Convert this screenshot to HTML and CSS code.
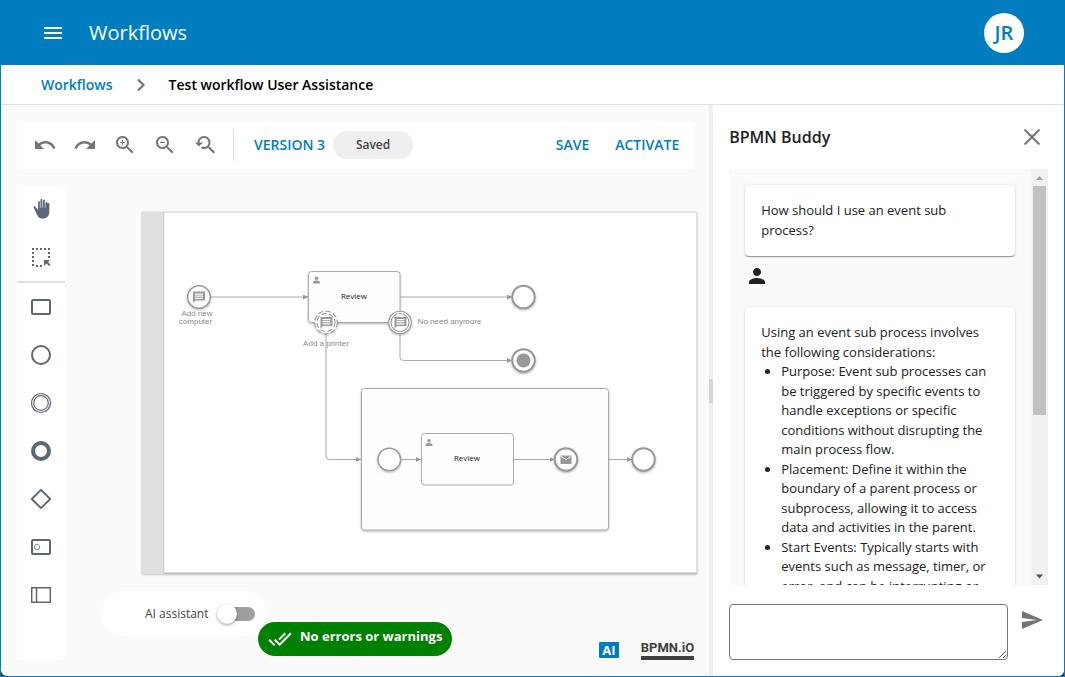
FILE: index.html
```html
<!DOCTYPE html>
<html lang="en">
<head>
<meta charset="utf-8">
<title>Workflows</title>
<link rel="stylesheet" href="styles.css">
</head>
<body>
<div class="app">
  <header class="topbar">
    <button class="icon-btn menu" type="button" aria-label="Menu"><svg width="24" height="24" viewBox="0 0 24 24"><path fill="currentColor" d="M3 18h18v-2H3v2zm0-5h18v-2H3v2zm0-7v2h18V6H3z"/></svg></button>
    <h1 class="title">Workflows</h1>
    <button class="avatar" type="button">JR</button>
  </header>
  <nav class="crumbs" aria-label="Breadcrumb">
    <a href="#">Workflows</a>
    <svg width="24" height="24" viewBox="0 0 24 24"><path d="M9 6.500L14.500 12 9 17.500" fill="none" stroke="#757575" stroke-width="2.200"/></svg>
    <span>Test workflow User Assistance</span>
  </nav>
  <main class="main">
    <section class="editor">
      <div class="toolbar">
        <button class="tool" type="button" aria-label="Undo"><svg width="24" height="24" viewBox="0 0 24 24"><path fill="currentColor" d="M12.500 8c-2.650 0-5.050.99-6.900 2.600L2 7v9h9l-3.620-3.620c1.390-1.160 3.160-1.880 5.120-1.880 3.540 0 6.550 2.310 7.600 5.500l2.370-.78C21.080 11.030 17.150 8 12.500 8z"/></svg></button>
        <button class="tool" type="button" aria-label="Redo"><svg width="24" height="24" viewBox="0 0 24 24"><path fill="currentColor" d="M18.400 10.600C16.550 8.990 14.150 8 11.500 8c-4.650 0-8.580 3.030-9.960 7.220L3.900 16c1.050-3.190 4.050-5.500 7.600-5.500 1.950 0 3.730.72 5.120 1.880L13 16h9V7l-3.600 3.600z"/></svg></button>
        <button class="tool" type="button" aria-label="Zoom in"><svg width="24" height="24" viewBox="0 0 24 24"><path fill="currentColor" d="M15.500 14h-.79l-.28-.27C15.410 12.590 16 11.110 16 9.500 16 5.910 13.090 3 9.500 3S3 5.910 3 9.500 5.910 16 9.500 16c1.610 0 3.090-.59 4.230-1.570l.27.28v.79l5 4.990L20.490 19l-4.990-5zm-6 0C7.010 14 5 11.990 5 9.500S7.010 5 9.500 5 14 7.010 14 9.500 11.990 14 9.500 14zm2.500-4h-2v2H9v-2H7V9h2V7h1v2h2v1z"/></svg></button>
        <button class="tool" type="button" aria-label="Zoom out"><svg width="24" height="24" viewBox="0 0 24 24"><path fill="currentColor" d="M15.500 14h-.79l-.28-.27C15.410 12.590 16 11.110 16 9.500 16 5.910 13.090 3 9.500 3S3 5.910 3 9.500 5.910 16 9.500 16c1.610 0 3.090-.59 4.230-1.570l.27.28v.79l5 4.990L20.490 19l-4.990-5zm-6 0C7.010 14 5 11.990 5 9.500S7.010 5 9.500 5 14 7.010 14 9.500 11.990 14 9.500 14zM7 9h5v1H7z"/></svg></button>
        <button class="tool" type="button" aria-label="Reset zoom"><svg width="24" height="24" viewBox="0 0 24 24"><path fill="currentColor" d="M17.010 14h-.8l-.27-.27c.98-1.140 1.570-2.610 1.570-4.230 0-3.590-2.910-6.500-6.500-6.500s-6.500 3-6.500 6.500H2l3.840 4 4.160-4H6.510C6.510 7 8.530 5 11.010 5s4.500 2.010 4.500 4.500c0 2.480-2.020 4.500-4.500 4.500-.65 0-1.260-.14-1.820-.38L7.710 15.100c.97.57 2.090.9 3.300.9 1.610 0 3.080-.59 4.220-1.570l.27.270v.79l5.010 4.990L22 19l-4.990-5z"/></svg></button>
        <span class="rule"></span>
        <button class="text-btn version" type="button">VERSION 3</button>
        <span class="chip">Saved</span>
        <span class="actions">
          <button class="text-btn" type="button">SAVE</button>
          <button class="text-btn" type="button">ACTIVATE</button>
        </span>
      </div>
      <div class="workspace">
        <div class="palette">
          <button class="pal" type="button" aria-label="Hand tool"><svg width="24" height="24" viewBox="0 0 24 24"><path fill="currentColor" d="M21 6v9.500c0 3.900-3.100 6.500-7 6.500-2.600 0-4.700-1-6-3.200L4 10.600c-.4-.9.900-1.600 1.700-.8L8.300 13h.5V5.100c0-1.300 1.900-1.300 1.900 0V11h.7V3.100c0-1.300 2-1.300 2 0V11h.7V3.900c0-1.300 2-1.300 2 0V11h.7V6c0-1.300 1.900-1.300 1.900 0h2.300z" transform="translate(1 0) scale(.92 .98)"/></svg></button>
          <button class="pal" type="button" aria-label="Lasso tool"><svg width="24" height="24" viewBox="0 0 24 24"><path d="M3 4h18M4 7v15M20 7v7M7 21h8" fill="none" stroke="currentColor" stroke-width="2" stroke-dasharray="2 2"/><path fill="currentColor" d="M15 15h6l-2 2 2.500 2.500-1.500 1.500-2.500-2.500L15 21z"/></svg></button>
          <hr>
          <button class="pal" type="button" aria-label="Task"><svg width="24" height="24" viewBox="0 0 24 24"><rect x="3" y="5" width="18" height="14" rx="1" fill="none" stroke="currentColor" stroke-width="2"/></svg></button>
          <button class="pal" type="button" aria-label="Start event"><svg width="24" height="24" viewBox="0 0 24 24"><circle cx="12" cy="12" r="9" fill="none" stroke="currentColor" stroke-width="2"/></svg></button>
          <button class="pal" type="button" aria-label="Intermediate event"><svg width="24" height="24" viewBox="0 0 24 24"><g fill="none" stroke="currentColor" stroke-width="1.200"><circle cx="12" cy="12" r="9.500"/><circle cx="12" cy="12" r="7.300"/></g></svg></button>
          <button class="pal" type="button" aria-label="End event"><svg width="24" height="24" viewBox="0 0 24 24"><circle cx="12" cy="12" r="8" fill="none" stroke="currentColor" stroke-width="4"/></svg></button>
          <button class="pal" type="button" aria-label="Gateway"><svg width="24" height="24" viewBox="0 0 24 24"><path d="M12 2.800L21.200 12 12 21.200 2.800 12z" fill="none" stroke="currentColor" stroke-width="1.900" stroke-linejoin="round"/></svg></button>
          <button class="pal" type="button" aria-label="Sub process"><svg width="24" height="24" viewBox="0 0 24 24"><rect x="3" y="5" width="18" height="14" rx="1" fill="none" stroke="currentColor" stroke-width="2"/><circle cx="8" cy="12" r="2.700" fill="none" stroke="currentColor" stroke-width=".7"/></svg></button>
          <button class="pal" type="button" aria-label="Pool"><svg width="24" height="24" viewBox="0 0 24 24"><path d="M2.700 4.700h18.600v14.600H2.700zM7.500 5v14" fill="none" stroke="currentColor" stroke-width="1.500"/></svg></button>
        </div>
        <div class="stage">
          <svg class="diagram" viewBox="65 185 644 475" preserveAspectRatio="xMinYMin meet">
            <defs>
              <marker id="arrow" viewBox="0 0 5 5" refX="5" refY="2.500" markerWidth="5" markerHeight="5" markerUnits="userSpaceOnUse" orient="auto"><path d="M0 0L5 2.500 0 5z" fill="#999"/></marker>
              <filter id="lift" x="-20%" y="-20%" width="140%" height="150%"><feDropShadow dx="0" dy="1" stdDeviation="1" flood-color="#000" flood-opacity=".3"/></filter>
              <path id="msg" d="M0 0h12v9H2.500L0 11.500zM2 2v1.200h8V2zM2 4.100v1.200h8V4.100zM2 6.200v1.200h8V6.200z" fill="#999" fill-rule="evenodd"/>
              <g id="user" fill="#999"><circle cx="3.500" cy="1.800" r="1.800"/><path d="M0 7V6c0-1.500 2-2 3.500-2S7 4.500 7 6v1z"/></g>
            </defs>
            <rect x="142" y="211.500" width="555" height="362" fill="#dfdfdf" filter="url(#lift)"/>
            <path d="M163.500 212v361" stroke="#d0d0d0"/>
            <rect x="164.500" y="213" width="531.500" height="359" fill="#fff"/>
            <path d="M164 573.500h533" stroke="#bbb"/>
            <g class="flow">
              <path d="M211 297h97"/><path d="M400 297h112"/>
              <path d="M400 334v23q0 3.500 3.500 3.500h108.500"/>
              <path d="M608 459.500h24"/>
            </g>
            <g class="shape" filter="url(#lift)">
              <rect x="361.500" y="388.500" width="247" height="141.500" rx="3"/>
              <rect x="308.500" y="271.500" width="91.500" height="51" rx="3"/>
              <rect x="421.500" y="433.500" width="92" height="51.500" rx="3"/>
            </g>
            <g class="flow">
              <path d="M326 334v122q0 3.500 3.500 3.500H361"/>
              <path d="M401 459.500h20"/><path d="M513.500 459.500h41"/>
            </g>
            <g class="event" filter="url(#lift)">
              <circle cx="199" cy="297" r="11.300"/>
              <circle cx="389.300" cy="459.500" r="11.300"/>
              <g class="end"><circle cx="523.500" cy="297" r="11.300"/><circle cx="523.500" cy="360.500" r="11.300"/><circle cx="566" cy="459.500" r="11.300"/><circle cx="643.500" cy="459.500" r="11.300"/></g>
              <g class="thin"><circle cx="400" cy="322.500" r="11.300"/><circle cx="400" cy="322.500" r="9"/></g>
              <g class="thin" stroke-dasharray="5 2.500"><circle cx="326" cy="322.500" r="11.300"/><circle cx="326" cy="322.500" r="9"/></g>
            </g>
            <circle cx="523.500" cy="360.500" r="7" fill="#999"/>
            <use href="#msg" x="193" y="291.500"/><use href="#msg" x="320.500" y="317"/><use href="#msg" x="394.500" y="317"/>
            <use href="#user" x="313" y="276.500"/><use href="#user" x="425.500" y="439"/>
            <path d="M560.500 455.500h11v8.500h-11z" fill="#999"/><path d="M561 456.500l5 3 5-3" fill="none" stroke="#fff"/>
            <g class="task-label"><text x="354" y="299">Review</text><text x="467" y="461">Review</text></g>
            <g class="ext-label"><text x="197" y="316">Add new</text><text x="195.500" y="324">computer</text><text x="326" y="346">Add a printer</text><text x="449.500" y="324">No need anymore</text></g>
          </svg>
          <label class="assist">AI assistant <input type="checkbox"></label>
          <button class="status" type="button"><svg width="24" height="24" viewBox="0 0 24 24"><path fill="currentColor" d="M18 7l-1.410-1.410-6.340 6.340 1.410 1.410L18 7zm4.240-1.410L11.660 16.170 7.480 12l-1.410 1.410L11.660 19l12-12-1.420-1.410zM.41 13.410L6 19l1.410-1.410L1.830 12 .41 13.410z"/></svg><span>No errors or warnings</span></button>
          <div class="brands"><span class="ai">AI</span><a class="bpmn" href="#">BPMN.iO</a></div>
        </div>
      </div>
    </section>
    <div class="splitter"><span></span></div>
    <aside class="buddy">
      <div class="buddy-head"><h2>BPMN Buddy</h2><button class="icon-btn" type="button" aria-label="Close"><svg width="24" height="24" viewBox="0 0 24 24"><path d="M4.500 4.500l15 15M19.500 4.500l-15 15" stroke="#757575" stroke-width="2"/></svg></button></div>
      <div class="chat">
        <div class="messages">
          <div class="card">How should I use an event sub process?</div>
          <svg class="who" width="24" height="24" viewBox="0 0 24 24"><path fill="#212121" d="M12 12c2.210 0 4-1.790 4-4s-1.790-4-4-4-4 1.790-4 4 1.790 4 4 4zm0 2c-2.670 0-8 1.340-8 4v2h16v-2c0-2.660-5.330-4-8-4z"/></svg>
          <div class="card">Using an event sub process involves the following considerations:
            <ul>
              <li>Purpose: Event sub processes can be triggered by specific events to handle exceptions or specific conditions without disrupting the main process flow.</li>
              <li>Placement: Define it within the boundary of a parent process or subprocess, allowing it to access data and activities in the parent.</li>
              <li>Start Events: Typically starts with events such as message, timer, or error, and can be interrupting or</li>
            </ul>
          </div>
        </div>
        <div class="scrollbar">
          <svg width="17" height="17" viewBox="0 0 17 17"><path d="M5 11l3.500-4 3.500 4z" fill="#a3a3a3"/></svg>
          <div class="track"><div class="thumb"></div></div>
          <svg width="17" height="17" viewBox="0 0 17 17"><path d="M5 6.500l3.500 4 3.500-4z" fill="#505050"/></svg>
        </div>
      </div>
      <form class="compose">
        <textarea aria-label="Message"></textarea>
        <button class="icon-btn" type="button" aria-label="Send"><svg width="24" height="24" viewBox="0 0 24 24"><path fill="#757575" d="M2.010 21L23 12 2.010 3 2 10l15 2-15 2z"/></svg></button>
      </form>
    </aside>
  </main>
</div>
</body>
</html>
```
FILE: styles.css
```css
* { box-sizing: border-box; }
body { margin: 0; font: 13px/1.5 "Open Sans", "Noto Sans", sans-serif; color: #212121; background: #243b45; }
button { font: inherit; color: inherit; background: none; border: 0; padding: 0; cursor: pointer; }
svg { display: block; flex: none; }
h1, h2 { margin: 0; }
.app { height: 100vh; display: flex; flex-direction: column; border: 1px solid #007dbf; }
.icon-btn { display: flex; }

.topbar { height: 64px; flex: none; display: flex; align-items: center; padding: 0 40px; background: #007dbf; color: #fff; }
.title { margin-left: 24px; font-size: 20px; font-weight: 400; }
.avatar { margin-left: auto; width: 40px; height: 40px; border-radius: 50%; background: #fff; color: #007dbf; font-size: 20px; font-weight: 600; }

.crumbs { height: 40px; flex: none; display: flex; align-items: center; gap: 16px; padding: 0 40px; background: #fff; border-bottom: 1px solid #e0e0e0; font-size: 14px; font-weight: 600; color: #000; }
.crumbs a { color: #007dbf; text-decoration: none; }

.main { flex: 1; min-height: 0; display: flex; background: #fafafa; border-radius: 0 0 6px 6px; overflow: hidden; }
.editor { flex: 1; min-width: 0; display: flex; flex-direction: column; gap: 16px; padding: 16px 0 16px 16px; }
.toolbar { height: 48px; flex: none; margin-right: 16px; padding: 0 14px 0 8px; display: flex; align-items: center; background: #fff; }
.tool { width: 40px; height: 40px; display: flex; align-items: center; justify-content: center; color: #757575; }
.rule { width: 1px; height: 32px; background: #e0e0e0; margin: 0 20px 0 8px; }
.text-btn { color: #007dbf; font-size: 14px; font-weight: 600; line-height: 20px; white-space: nowrap; }
.chip { margin-left: 8px; width: 80px; height: 28px; line-height: 28px; border-radius: 14px; background: #eee; color: #424242; text-align: center; font-size: 12px; font-weight: 600; }
.actions { margin-left: auto; display: flex; gap: 26px; }

.workspace { flex: 1; min-height: 0; display: flex; }
.palette { width: 48px; background: #fff; border-radius: 4px; color: #5b6875; }
.pal { width: 48px; height: 48px; display: flex; align-items: center; justify-content: center; }
.palette hr { margin: 0; border: 0; height: 2px; background: #e0e0e0; }
.stage { flex: 1; min-width: 0; position: relative; }
.diagram { width: 100%; height: 100%; }
.flow path { fill: none; stroke: #aaa; stroke-width: 1; marker-end: url(#arrow); }
.shape rect { fill: #fdfdfd; stroke: #aaa; stroke-width: 1; }
.event circle { fill: #fff; stroke: #999; stroke-width: 1.4; }
.event .thin circle { stroke-width: 1.1; }
.event .end circle { stroke-width: 2; }
.task-label { font: 500 8px "Open Sans", sans-serif; fill: #212121; text-anchor: middle; }
.ext-label { font: 8px "Liberation Sans", sans-serif; fill: #8c8c8c; text-anchor: middle; }

.assist { position: absolute; left: 36px; bottom: 24px; height: 45px; padding: 0 12px 0 44px; display: flex; align-items: center; gap: 11px; border-radius: 23px; background: #fff; color: #424242; font-size: 12px; }
.assist input { appearance: none; position: relative; margin: 0; width: 35px; height: 14px; border-radius: 7px; background: #9e9e9e; }
.assist input::before { content: ""; position: absolute; left: -3px; top: -3px; width: 20px; height: 20px; border-radius: 50%; background: #fff; box-shadow: 0 1px 3px rgba(0, 0, 0, .4); }
.status { position: absolute; left: 193px; bottom: 4px; height: 34px; padding: 0 10px; display: flex; align-items: center; gap: 8px; border-radius: 17px; background: #008000; color: #fff; font-weight: 700; white-space: nowrap; }
.status span { padding-bottom: 4px; }
.brands { position: absolute; right: 15px; bottom: 0; display: flex; align-items: center; gap: 22px; }
.ai { width: 20px; height: 16px; background: #007dbf; color: #fff; font-weight: 700; line-height: 16px; text-align: center; border-radius: 1px; }
.bpmn { border-bottom: 4px solid #404040; color: #404040; text-decoration: none; font: 700 13px/17px Roboto, sans-serif; }

.splitter { width: 4px; background: #eee; display: flex; align-items: center; }
.splitter span { width: 4px; height: 24px; background: #d6d6d6; }

.buddy { width: 33%; min-width: 320px; background: #fff; padding: 20px 16px 16px; display: flex; flex-direction: column; }
.buddy-head { display: flex; align-items: center; justify-content: space-between; padding-right: 4px; height: 24px; }
.buddy-head h2 { font-size: 16px; font-weight: 600; }
.chat { flex: 1; min-height: 0; margin: 20px 0 19px; display: flex; background: #fafafa; border-radius: 4px 0 0 4px; overflow: hidden; }
.messages { flex: 1; min-width: 0; overflow: hidden; padding: 16px; }
.card { padding: 16px; background: #fff; border-radius: 4px; box-shadow: 0 1px 1px rgba(0, 0, 0, .4), 0 0 3px rgba(0, 0, 0, .1); }
.who { margin: 8px 0 19px; }
.card ul { margin: 0; padding-left: 20px; }
.scrollbar { width: 17px; display: flex; flex-direction: column; background: #f1f1f1; }
.track { flex: 1; padding: 0 2px; }
.thumb { height: 60%; background: #c1c1c1; }
.compose { display: flex; gap: 12px; padding-right: 4px; }
.compose textarea { flex: 1; height: 56px; min-width: 0; border: 1px solid #757575; border-radius: 4px; background: #fff; font: inherit; }
.compose .icon-btn { height: 24px; margin-top: 4px; }
```
